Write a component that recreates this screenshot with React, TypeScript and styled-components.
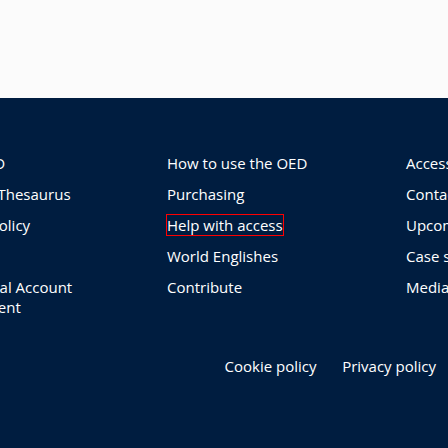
import React from "react";
import styled, { createGlobalStyle } from "styled-components";

const Global = createGlobalStyle`
  html, body {
    margin: 0;
    padding: 0;
    overflow: hidden;
    background: #001d40;
  }
  body {
    font-family: "Open Sans", "Noto Sans", sans-serif;
  }
`;

const Page = styled.div`
  width: 448px;
  height: 448px;
  display: flex;
  flex-direction: column;
  overflow: hidden;
`;

const TopBand = styled.div`
  height: 98px;
  flex: none;
  background: #fbfbfb;
`;

const Footer = styled.footer`
  flex: 1;
  background: #001d40;
  padding-top: 54.5px;
  display: flex;
  flex-direction: column;
  gap: 39px;
`;

const Columns = styled.nav`
  display: grid;
  grid-template-columns: 239px 239px 240px;
  margin-left: -72px;
  width: 718px;
`;

const LinkList = styled.ul`
  list-style: none;
  margin: 0;
  padding: 0 18px 0 0;
  display: flex;
  flex-direction: column;
  gap: 10.6px;
`;

const Item = styled.li<{ $nowrap?: boolean }>`
  font-size: 15px;
  line-height: 20.4px;
  color: #ffffff;
  white-space: ${(p) => (p.$nowrap ? "nowrap" : "normal")};
`;

const Link = styled.a<{ $focused?: boolean }>`
  color: #ffffff;
  text-decoration: none;
  outline: ${(p) => (p.$focused ? "1px solid #ff0000" : "none")};
`;

const LegalRow = styled.div`
  display: flex;
  justify-content: flex-end;
  gap: 25.6px;
  padding-right: 12px;
`;

const LegalLink = styled.a`
  font-size: 15px;
  line-height: 20.4px;
  color: #ffffff;
  text-decoration: none;
`;

const columns: { label: string; focused?: boolean }[][] = [
  [
    { label: "About OED" },
    { label: "Historical Thesaurus" },
    { label: "Editorial policy" },
    { label: "Blog" },
    { label: "Institutional Account Management" },
  ],
  [
    { label: "How to use the OED" },
    { label: "Purchasing" },
    { label: "Help with access", focused: true },
    { label: "World Englishes" },
    { label: "Contribute" },
  ],
  [
    { label: "Accessibility" },
    { label: "Contact us" },
    { label: "Upcoming events" },
    { label: "Case studies" },
    { label: "Media enquiries" },
  ],
];

export default function App() {
  return (
    <>
      <Global />
      <Page>
        <TopBand />
        <Footer>
          <Columns>
            {columns.map((col, ci) => (
              <LinkList key={ci}>
                {col.map((it) => (
                  <Item key={it.label} $nowrap={ci === 2}>
                    <Link href="#" $focused={it.focused}>
                      {it.label}
                    </Link>
                  </Item>
                ))}
              </LinkList>
            ))}
          </Columns>
          <LegalRow>
            <LegalLink href="#">Cookie policy</LegalLink>
            <LegalLink href="#">Privacy policy</LegalLink>
          </LegalRow>
        </Footer>
      </Page>
    </>
  );
}
